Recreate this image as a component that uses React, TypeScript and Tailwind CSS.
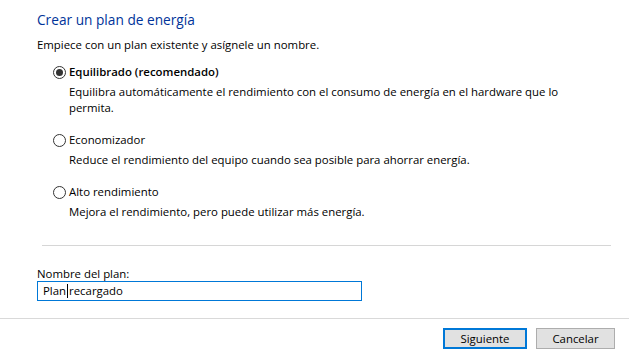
import { useState } from 'react';

const plans = [
  {
    id: 'equilibrado',
    name: 'Equilibrado (recomendado)',
    desc: 'Equilibra automáticamente el rendimiento con el consumo de energía en el hardware que lo permita.',
  },
  {
    id: 'economizador',
    name: 'Economizador',
    desc: 'Reduce el rendimiento del equipo cuando sea posible para ahorrar energía.',
  },
  {
    id: 'alto',
    name: 'Alto rendimiento',
    desc: 'Mejora el rendimiento, pero puede utilizar más energía.',
  },
];

function Radio({ checked }: { checked: boolean }) {
  return (
    <span className="w-[13px] h-[13px] rounded-full border border-[#333333] bg-white flex items-center justify-center shrink-0">
      {checked && <span className="w-[7px] h-[7px] rounded-full bg-[#333333]" />}
    </span>
  );
}

export default function App() {
  const [selected, setSelected] = useState('equilibrado');

  return (
    <div className="w-[629px] h-[354px] bg-white text-[#000000] text-[11.4px] leading-[16px] overflow-hidden font-['Open_Sans','Noto_Sans',sans-serif]">
      <div className="px-[37px] pt-[8px]">
        {/* Encabezado */}
        <h1 className="text-[#003399] text-[13.7px] leading-[23px]">Crear un plan de energía</h1>
        <p className="mt-[6px]">Empiece con un plan existente y asígnele un nombre.</p>

        {/* Planes */}
        <div className="mt-[11px] pl-[16px] flex flex-col gap-[16px]">
          {plans.map((plan) => (
            <div key={plan.id}>
              <button
                onClick={() => setSelected(plan.id)}
                className="flex items-center gap-[3px] h-[16px]"
              >
                <Radio checked={selected === plan.id} />
                <span className={selected === plan.id ? 'font-semibold' : ''}>{plan.name}</span>
              </button>
              <p className="mt-[4px] pl-[16px] w-[510px]">{plan.desc}</p>
            </div>
          ))}
        </div>
      </div>

      <div className="mt-[25px] mx-[42px] w-[569px] border-t border-[#d6d6d6]" />

      {/* Nombre del plan */}
      <div className="px-[37px] mt-[20px]">
        <label className="block leading-[15px]">Nombre del plan:</label>
        <div className="w-[325px] h-[20px] border border-[#0078d7] flex items-center pl-[5px]">
          <span>Plan</span>
          <span className="w-px h-[14px] bg-black mx-px" />
          <span>recargado</span>
        </div>
      </div>

      <div className="mt-[17px] border-t border-[#d9d9d9]" />

      {/* Botones */}
      <div className="flex justify-end gap-[9px] pr-[14px] mt-[9px]">
        <button className="w-[84px] h-[21px] bg-[#e1e1e1] border-2 border-[#0078d7] flex items-center justify-center">
          Siguiente
        </button>
        <button className="w-[79px] h-[21px] bg-[#e1e1e1] border border-[#adadad] flex items-center justify-center">
          Cancelar
        </button>
      </div>
    </div>
  );
}
